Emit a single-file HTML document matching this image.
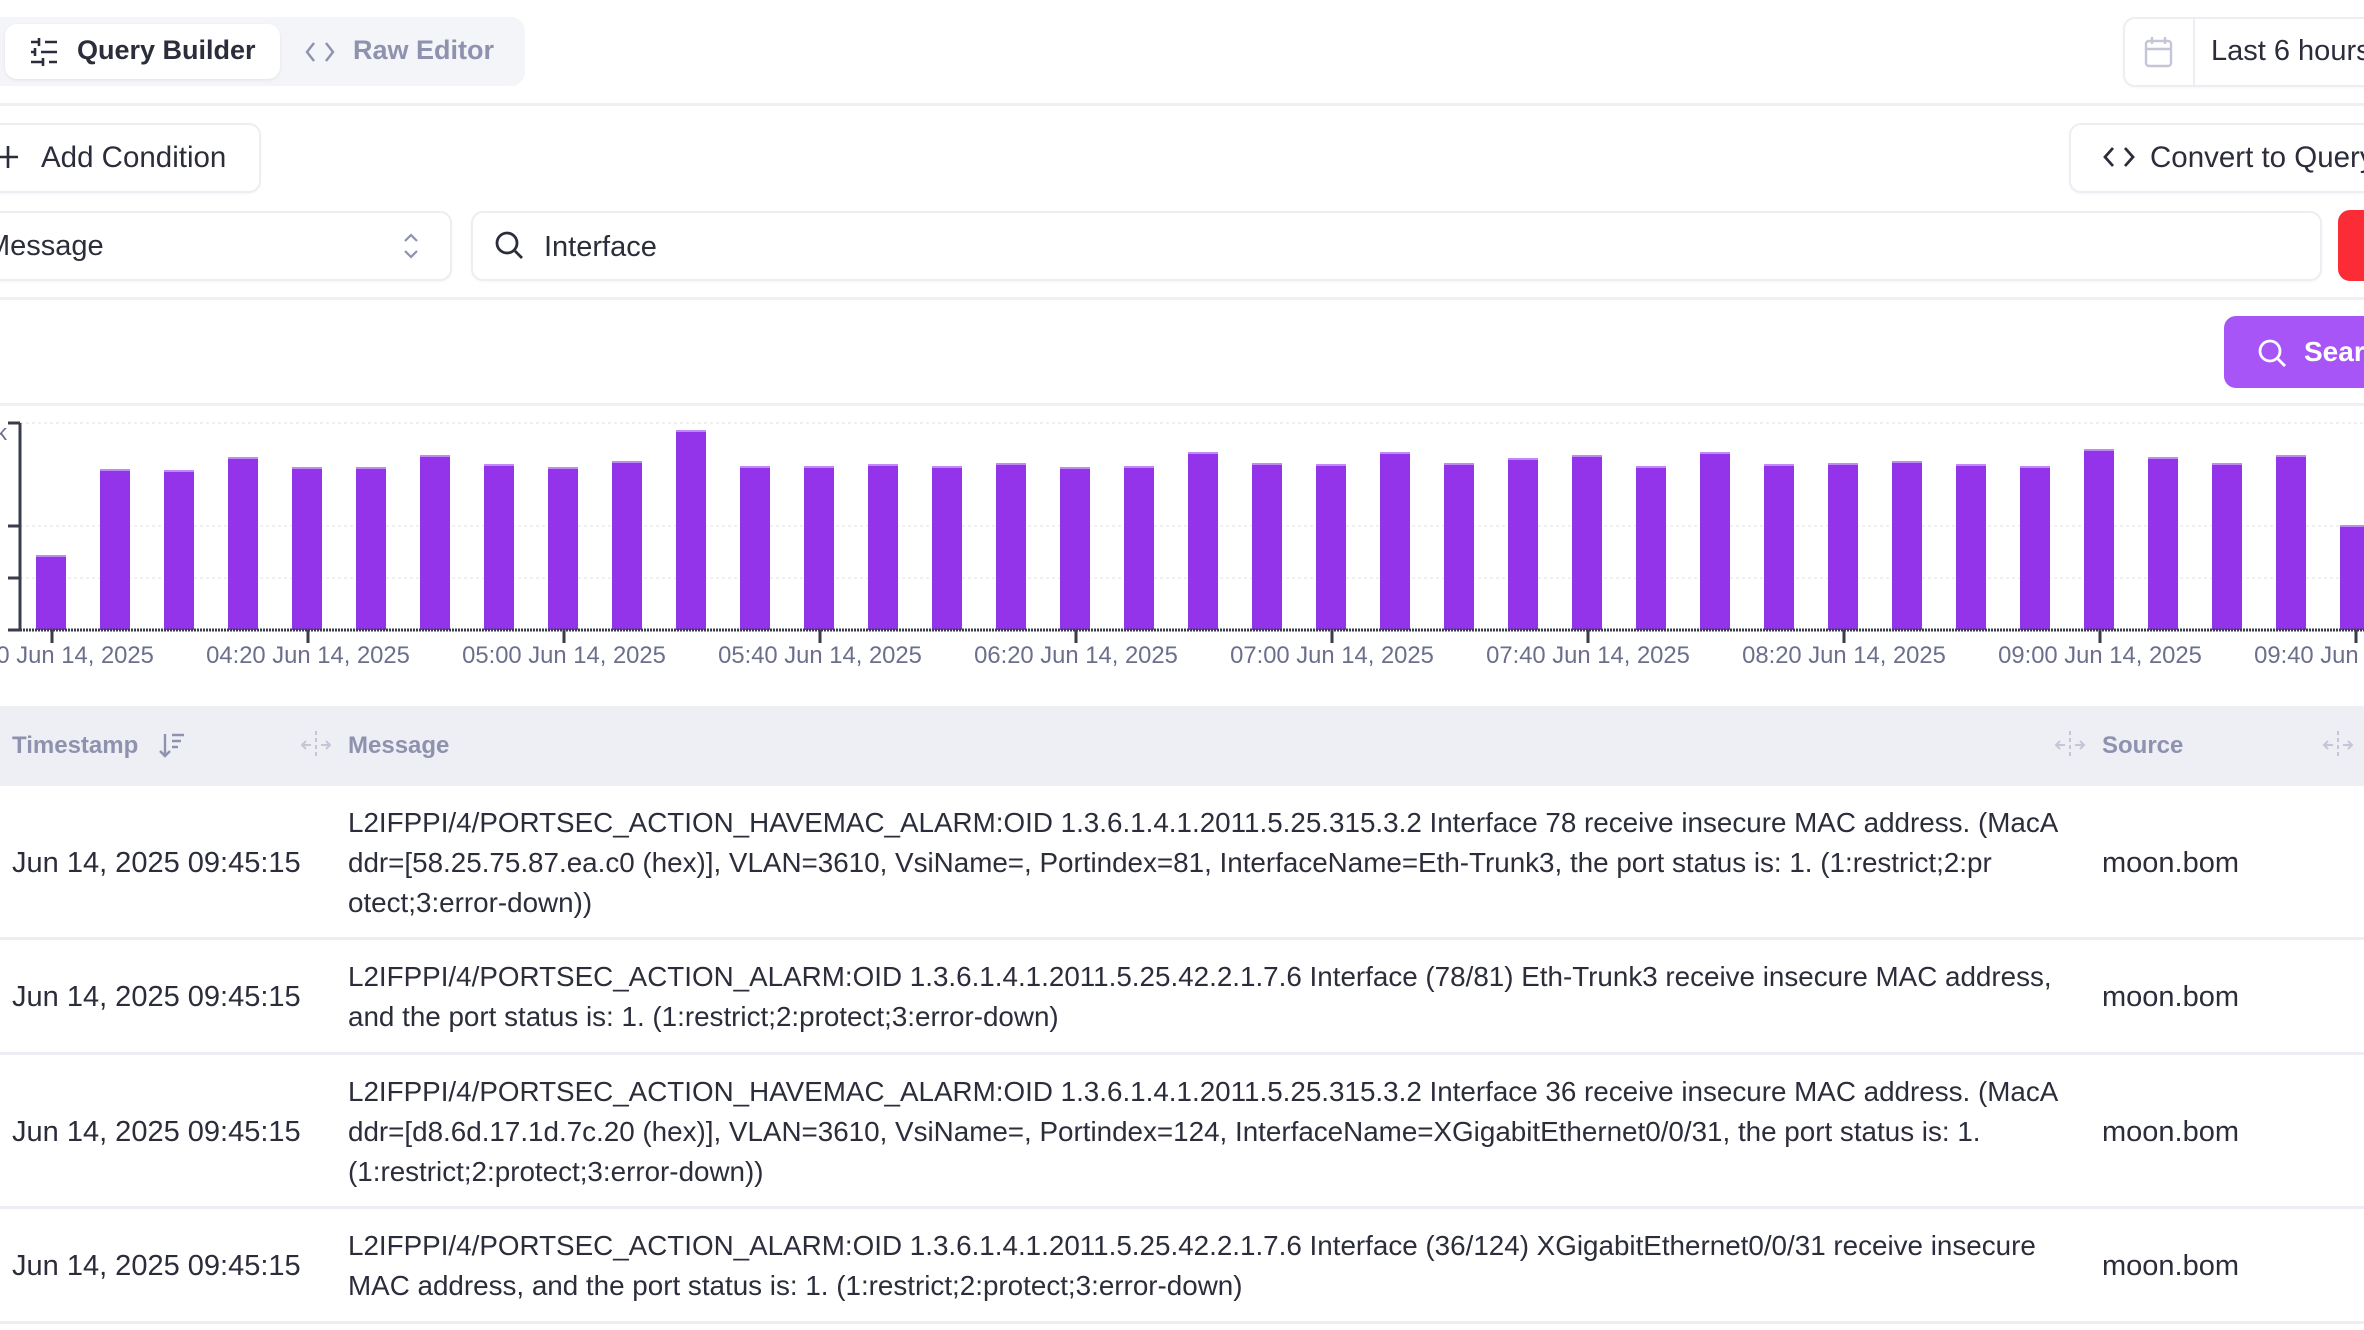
<!DOCTYPE html>
<html><head><meta charset="utf-8"><style>
*{box-sizing:border-box;margin:0;padding:0}
body{width:2364px;height:1330px;overflow:hidden;background:#fff;font-family:"Liberation Sans",sans-serif;color:#2b2d3b;position:relative}
.a{position:absolute}
.line{position:absolute;left:0;width:2364px;height:3px;background:#eef0f4}
.btn{position:absolute;border:2px solid #eceef3;border-radius:12px;background:#fff;box-shadow:0 1px 2px rgba(0,0,0,.04)}
.t{position:absolute;white-space:nowrap;font-size:28px}
.row{position:absolute;left:0;width:2364px;border-bottom:3px solid #eceef3}
.msg{position:absolute;left:348px;font-size:27.8px;line-height:40px;white-space:nowrap;color:#2b2d3b}
.ts{position:absolute;left:12px;font-size:29px;white-space:nowrap}
.src{position:absolute;left:2102px;font-size:29px;white-space:nowrap}
</style></head><body>

<div class="a" style="left:-20px;top:17px;width:545px;height:69px;background:#f4f5f9;border-radius:14px"></div>
<div class="a" style="left:5px;top:24px;width:275px;height:55px;background:#fff;border-radius:12px;box-shadow:0 1px 3px rgba(0,0,0,.08)"></div>
<svg class="a" style="left:29px;top:37px" width="30" height="30" viewBox="0 0 30 30" fill="none" stroke="#2b2d3b" stroke-width="2.6"><path d="M2 5h8M16 5h12M10 1v8M2 15h4M12 15h16M6 11v8M2 25h12M20 25h8M14 21v8"/></svg>
<div class="t" style="left:77px;top:35px;font-weight:600;font-size:27px">Query Builder</div>
<svg class="a" style="left:305px;top:40px" width="30" height="24" viewBox="0 0 30 24" fill="none" stroke="#8e92ae" stroke-width="2.4"><path d="M9 3L2 12l7 9M21 3l7 9-7 9"/></svg>
<div class="t" style="left:353px;top:35px;color:#8e92ae;font-weight:600;font-size:27px">Raw Editor</div>

<div class="btn" style="left:2123px;top:17px;width:300px;height:70px"></div>
<div class="a" style="left:2193px;top:18px;width:2px;height:68px;background:#eceef3"></div>
<svg class="a" style="left:2144px;top:36px" width="30" height="32" viewBox="0 0 30 32" fill="none" stroke="#c4c6d8" stroke-width="2.4"><rect x="2" y="5" width="25" height="25" rx="3"/><path d="M2 13h25M8 1v7M21 1v7"/></svg>
<div class="t" style="left:2211px;top:35px;font-size:29px">Last 6 hours</div>

<div class="line" style="top:103px"></div>

<div class="btn" style="left:-20px;top:123px;width:281px;height:70px"></div>
<svg class="a" style="left:-2px;top:146px" width="22" height="22" viewBox="0 0 22 22" stroke="#2b2d3b" stroke-width="2.6"><path d="M10 0v22M0 11h20"/></svg>
<div class="t" style="left:41px;top:141px;font-size:29.5px">Add Condition</div>

<div class="btn" style="left:2069px;top:123px;width:320px;height:70px"></div>
<svg class="a" style="left:2103px;top:145px" width="32" height="24" viewBox="0 0 32 24" fill="none" stroke="#2b2d3b" stroke-width="2.8"><path d="M10 3L2 12l8 9M22 3l8 9-8 9"/></svg>
<div class="t" style="left:2150px;top:141px;font-size:29.5px">Convert to Query</div>

<div class="btn" style="left:-20px;top:211px;width:472px;height:70px"></div>
<div class="t" style="left:-14px;top:230px;font-size:29px">Message</div>
<svg class="a" style="left:402px;top:232px" width="18" height="28" viewBox="0 0 18 28" fill="none" stroke="#8e92ae" stroke-width="2.2"><path d="M3 9l6-6 6 6M3 19l6 6 6-6"/></svg>
<div class="btn" style="left:471px;top:211px;width:1851px;height:70px"></div>
<svg class="a" style="left:494px;top:230px" width="32" height="32" viewBox="0 0 32 32" fill="none" stroke="#2b2d3b" stroke-width="2.8"><circle cx="13" cy="13" r="10"/><path d="M21 21l7 7"/></svg>
<div class="t" style="left:544px;top:231px;font-size:29px">Interface</div>
<div class="a" style="left:2338px;top:210px;width:60px;height:71px;background:#fb2c36;border-radius:12px"></div>

<div class="line" style="top:297px"></div>

<div class="a" style="left:2224px;top:316px;width:200px;height:72px;background:#a855f7;border-radius:12px"></div>
<svg class="a" style="left:2257px;top:338px" width="32" height="32" viewBox="0 0 32 32" fill="none" stroke="#fff" stroke-width="2.8"><circle cx="13" cy="13" r="10"/><path d="M21 21l7 7"/></svg>
<div class="t" style="left:2304px;top:336px;color:#fff;font-weight:700">Search</div>

<div class="line" style="top:403px"></div>

<svg class="a" style="left:0;top:410px" width="2364" height="270" viewBox="0 410 2364 270">
<g stroke="#eef0f4" stroke-width="2" stroke-dasharray="3 3"><path d="M20 423H2364M20 526H2364M20 578H2364"/></g>
<g fill="#9333ea" id="bars"></g>
<path d="M20 423V630" stroke="#3a3c4c" stroke-width="3"/>
<path d="M8 423H20M8 526H20M8 578H20M8 630H20" stroke="#3a3c4c" stroke-width="3"/>
<path d="M20 630H2364" stroke="#3a3c4c" stroke-width="3" stroke-dasharray="2 1"/>
<g stroke="#3a3c4c" stroke-width="3" id="ticks"></g>
<g font-family="Liberation Sans" font-size="23.8" fill="#6b6f8c" text-anchor="middle" id="labels"></g>
<text x="-4" y="440" font-family="Liberation Sans" font-size="22" fill="#6b6f8c">k</text>
</svg>
<script>
var tops=[555,469,470,457,467,467,455,464,467,461,430,466,466,464,466,463,467,466,452,463,464,452,463,458,455,466,452,464,463,461,464,466,449,457,463,455,525];
var b='';for(var i=0;i<tops.length;i++){var x=36+64*i;b+='<rect x="'+x+'" y="'+tops[i]+'" width="30" height="'+(630-tops[i])+'"/><rect x="'+x+'" y="'+tops[i]+'" width="30" height="2" fill="#c08af5"/>';}
document.getElementById('bars').innerHTML=b;
var L=['03:40','04:20','05:00','05:40','06:20','07:00','07:40','08:20','09:00','09:40'],t='',l='';
for(var j=0;j<L.length;j++){var x=52+256*j;t+='<path d="M'+x+' 630V643"/>';l+='<text x="'+x+'" y="663">'+L[j]+' Jun 14, 2025</text>';}
document.getElementById('ticks').innerHTML=t;document.getElementById('labels').innerHTML=l;
</script>

<div class="a" style="left:0;top:706px;width:2364px;height:80px;background:#eeeff5"></div>
<div class="t" style="left:12px;top:732px;font-size:24px;font-weight:600;color:#8e92ae">Timestamp</div>
<svg class="a" style="left:158px;top:732px" width="28" height="28" viewBox="0 0 28 28" fill="none" stroke="#8e92ae" stroke-width="2.4"><path d="M7 2v22M2 19l5 5 5-5M14 3h12M14 9h9M14 15h6"/></svg>
<svg class="a" style="left:300px;top:730px" width="32" height="30" viewBox="0 0 32 30" fill="none" stroke="#c4c6d8" stroke-width="2"><path d="M16 1v28" stroke-dasharray="4 3"/><path d="M2 15h9M21 15h9M6 11l-4 4 4 4M26 11l4 4-4 4"/></svg>
<div class="t" style="left:348px;top:732px;font-size:24px;font-weight:600;color:#8e92ae">Message</div>
<svg class="a" style="left:2054px;top:730px" width="32" height="30" viewBox="0 0 32 30" fill="none" stroke="#c4c6d8" stroke-width="2"><path d="M16 1v28" stroke-dasharray="4 3"/><path d="M2 15h9M21 15h9M6 11l-4 4 4 4M26 11l4 4-4 4"/></svg>
<div class="t" style="left:2102px;top:732px;font-size:24px;font-weight:600;color:#8e92ae">Source</div>
<svg class="a" style="left:2322px;top:730px" width="32" height="30" viewBox="0 0 32 30" fill="none" stroke="#c4c6d8" stroke-width="2"><path d="M16 1v28" stroke-dasharray="4 3"/><path d="M2 15h9M21 15h9M6 11l-4 4 4 4M26 11l4 4-4 4"/></svg>

<div class="row" style="top:786px;height:154px">
<div class="ts" style="top:61px">Jun 14, 2025 09:45:15</div>
<div class="msg" style="top:17px">L2IFPPI/4/PORTSEC_ACTION_HAVEMAC_ALARM:OID 1.3.6.1.4.1.2011.5.25.315.3.2 Interface 78 receive insecure MAC address. (MacA<br>ddr=[58.25.75.87.ea.c0 (hex)], VLAN=3610, VsiName=, Portindex=81, InterfaceName=Eth-Trunk3, the port status is: 1. (1:restrict;2:pr<br>otect;3:error-down))</div>
<div class="src" style="top:61px">moon.bom</div>
</div>
<div class="row" style="top:940px;height:115px">
<div class="ts" style="top:41px">Jun 14, 2025 09:45:15</div>
<div class="msg" style="top:17px">L2IFPPI/4/PORTSEC_ACTION_ALARM:OID 1.3.6.1.4.1.2011.5.25.42.2.1.7.6 Interface (78/81) Eth-Trunk3 receive insecure MAC address,<br>and the port status is: 1. (1:restrict;2:protect;3:error-down)</div>
<div class="src" style="top:41px">moon.bom</div>
</div>
<div class="row" style="top:1055px;height:154px">
<div class="ts" style="top:61px">Jun 14, 2025 09:45:15</div>
<div class="msg" style="top:17px">L2IFPPI/4/PORTSEC_ACTION_HAVEMAC_ALARM:OID 1.3.6.1.4.1.2011.5.25.315.3.2 Interface 36 receive insecure MAC address. (MacA<br>ddr=[d8.6d.17.1d.7c.20 (hex)], VLAN=3610, VsiName=, Portindex=124, InterfaceName=XGigabitEthernet0/0/31, the port status is: 1.<br>(1:restrict;2:protect;3:error-down))</div>
<div class="src" style="top:61px">moon.bom</div>
</div>
<div class="row" style="top:1209px;height:115px">
<div class="ts" style="top:41px">Jun 14, 2025 09:45:15</div>
<div class="msg" style="top:17px">L2IFPPI/4/PORTSEC_ACTION_ALARM:OID 1.3.6.1.4.1.2011.5.25.42.2.1.7.6 Interface (36/124) XGigabitEthernet0/0/31 receive insecure<br>MAC address, and the port status is: 1. (1:restrict;2:protect;3:error-down)</div>
<div class="src" style="top:41px">moon.bom</div>
</div>
</body></html>
